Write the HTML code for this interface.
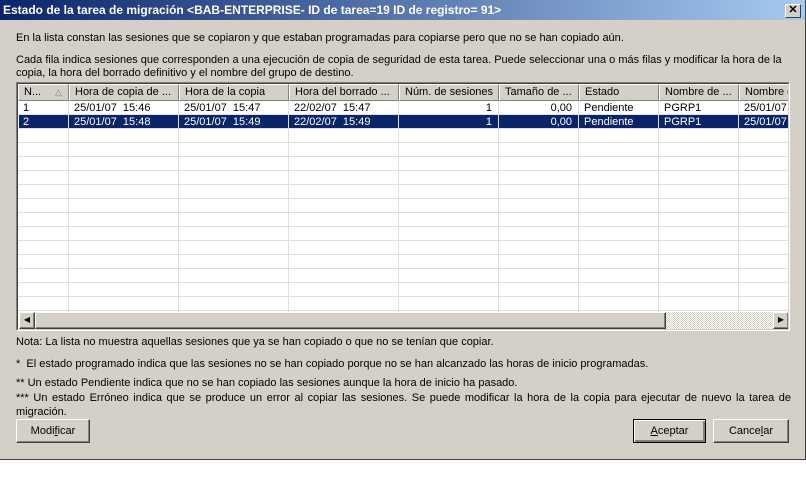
<!DOCTYPE html>
<html><head><meta charset="utf-8"><style>
*{margin:0;padding:0;box-sizing:border-box}
body{width:806px;height:479px;background:#fff;font-family:"Liberation Sans",sans-serif;font-size:11px;color:#000;position:relative;overflow:hidden}
.abs{position:absolute}
#win{left:0;top:0;width:806px;height:460px;background:#d4d0c8;border-right:1px solid #404040;border-bottom:1px solid #404040}
#title{left:0;top:0;width:805px;height:20px;background:linear-gradient(to right,#0a246a,#a6caf0);color:#fff;font-weight:bold;font-size:12px;line-height:20px;padding-left:3px;white-space:nowrap}
#close{left:785px;top:4px;width:16px;height:14px;background:#d4d0c8;border:1px solid;border-color:#fff #404040 #404040 #fff;font-size:11px;font-weight:bold;line-height:11px;text-align:center;color:#000}
.t{white-space:nowrap;font-size:11px}
.n{font-family:"Liberation Sans",sans-serif;font-size:11px;white-space:nowrap}
#list{left:16px;top:82px;width:774px;height:249px;background:#fff;border:1px solid;border-color:#808080 #fff #fff #808080;overflow:hidden}
#list:before{content:"";position:absolute;left:0;top:0;right:0;bottom:0;border:1px solid;border-color:#404040 #d4d0c8 #d4d0c8 #404040;pointer-events:none;z-index:5}
.h{position:absolute;top:1px;height:17px;background:#d4d0c8;border:1px solid;border-color:#fff #808080 #808080 #fff;padding-left:5px;line-height:15px;white-space:nowrap;overflow:hidden}
.vl{position:absolute;top:18px;width:1px;height:230px;background:#e0dfe3}
.hl{position:absolute;left:1px;width:772px;height:1px;background:#e0dfe3}
.c{position:absolute;height:14px;line-height:14px;white-space:nowrap;overflow:hidden;padding-left:5px}
.r{text-align:right;padding-right:6px;padding-left:0}
.sel{position:absolute;left:2px;top:32px;width:770px;height:14px;background:#0a246a}
.btn{position:absolute;height:24px;background:#d4d0c8;border:1px solid;border-color:#fff #404040 #404040 #fff;box-shadow:inset -1px -1px #808080;text-align:center;line-height:22px}
</style></head><body>
<div id="win" class="abs"></div>
<div id="title" class="abs">Estado de la tarea de migración &lt;BAB-ENTERPRISE- ID de tarea=19 ID de registro= 91&gt;</div>
<div id="close" class="abs">✕</div>
<div class="abs t" style="left:16px;top:32px">En la lista constan las sesiones que se copiaron y que estaban programadas para copiarse pero que no se han copiado aún.</div>
<div class="abs t" style="left:16px;top:54px">Cada fila indica sesiones que corresponden a una ejecución de copia de seguridad de esta tarea. Puede seleccionar una o más filas y modificar la hora de la</div>
<div class="abs t" style="left:16px;top:67px">copia, la hora del borrado definitivo y el nombre del grupo de destino.</div>
<div id="list" class="abs">
 <div class="h" style="left:1px;width:51px">N...<span style="position:absolute;left:36px;top:0;color:#808080;font-size:9px">△</span></div>
 <div class="h" style="left:52px;width:110px">Hora de copia de ...</div>
 <div class="h" style="left:162px;width:110px">Hora de la copia</div>
 <div class="h" style="left:272px;width:110px">Hora del borrado ...</div>
 <div class="h" style="left:382px;width:100px">Núm. de sesiones</div>
 <div class="h" style="left:482px;width:80px">Tamaño de ...</div>
 <div class="h" style="left:562px;width:80px">Estado</div>
 <div class="h" style="left:642px;width:80px">Nombre de ...</div>
 <div class="h" style="left:722px;width:60px">Nombre de</div>
 <div class="sel"></div>
 <div class="vl" style="left:51px"></div><div class="vl" style="left:161px"></div><div class="vl" style="left:271px"></div><div class="vl" style="left:381px"></div><div class="vl" style="left:481px"></div><div class="vl" style="left:561px"></div><div class="vl" style="left:641px"></div><div class="vl" style="left:721px"></div>
 <div class="hl" style="top:31px"></div><div class="hl" style="top:45px"></div><div class="hl" style="top:59px"></div><div class="hl" style="top:73px"></div><div class="hl" style="top:87px"></div><div class="hl" style="top:101px"></div><div class="hl" style="top:115px"></div><div class="hl" style="top:129px"></div><div class="hl" style="top:143px"></div><div class="hl" style="top:157px"></div><div class="hl" style="top:171px"></div><div class="hl" style="top:185px"></div><div class="hl" style="top:199px"></div><div class="hl" style="top:213px"></div><div class="hl" style="top:227px"></div>
 <div class="c" style="left:1px;top:18px;width:50px">1</div>
 <div class="c" style="left:52px;top:18px;width:109px">25/01/07&nbsp; 15:46</div>
 <div class="c" style="left:162px;top:18px;width:109px">25/01/07&nbsp; 15:47</div>
 <div class="c" style="left:272px;top:18px;width:109px">22/02/07&nbsp; 15:47</div>
 <div class="c r" style="left:382px;top:18px;width:99px">1</div>
 <div class="c r" style="left:482px;top:18px;width:79px">0,00</div>
 <div class="c" style="left:562px;top:18px;width:79px">Pendiente</div>
 <div class="c" style="left:642px;top:18px;width:79px">PGRP1</div>
 <div class="c" style="left:722px;top:18px;width:60px">25/01/07</div>
 <div style="color:#fff">
 <div class="c" style="left:1px;top:32px;width:50px">2</div>
 <div class="c" style="left:52px;top:32px;width:109px">25/01/07&nbsp; 15:48</div>
 <div class="c" style="left:162px;top:32px;width:109px">25/01/07&nbsp; 15:49</div>
 <div class="c" style="left:272px;top:32px;width:109px">22/02/07&nbsp; 15:49</div>
 <div class="c r" style="left:382px;top:32px;width:99px">1</div>
 <div class="c r" style="left:482px;top:32px;width:79px">0,00</div>
 <div class="c" style="left:562px;top:32px;width:79px">Pendiente</div>
 <div class="c" style="left:642px;top:32px;width:79px">PGRP1</div>
 <div class="c" style="left:722px;top:32px;width:60px">25/01/07</div>
 </div>
 <div style="position:absolute;left:2px;top:229px;width:770px;height:17px;background:repeating-conic-gradient(#d4d0c8 0 25%,#fff 0 50%) 0 0/2px 2px"></div>
 <div class="btn" style="left:2px;top:229px;width:16px;height:17px;line-height:14px;font-size:8px">◀</div>
 <div class="btn" style="left:18px;top:229px;width:631px;height:17px"></div>
 <div class="btn" style="left:756px;top:229px;width:16px;height:17px;line-height:14px;font-size:8px">▶</div>
</div>
<div class="abs n" style="left:16px;top:336px">Nota: La lista no muestra aquellas sesiones que ya se han copiado o que no se tenían que copiar.</div>
<div class="abs n" style="left:16px;top:358px">*&nbsp; El estado programado indica que las sesiones no se han copiado porque no se han alcanzado las horas de inicio programadas.</div>
<div class="abs n" style="left:16px;top:377px">** Un estado Pendiente indica que no se han copiado las sesiones aunque la hora de inicio ha pasado.</div>
<div class="abs n" style="left:16px;top:391px;width:775px;white-space:normal;text-align:justify;line-height:14px;word-spacing:1px">*** Un estado Erróneo indica que se produce un error al copiar las sesiones. Se puede modificar la hora de la copia para ejecutar de nuevo la tarea de migración.</div>
<div class="btn n" style="left:16px;top:419px;width:74px">Modi<u>f</u>icar</div>
<div class="btn n" style="left:633px;top:419px;width:73px;border:1px solid #000;box-shadow:inset 1px 1px #fff,inset -2px -2px #808080"><u>A</u>ceptar</div>
<div class="btn n" style="left:713px;top:419px;width:76px">Cance<u>l</u>ar</div>
</body></html>
